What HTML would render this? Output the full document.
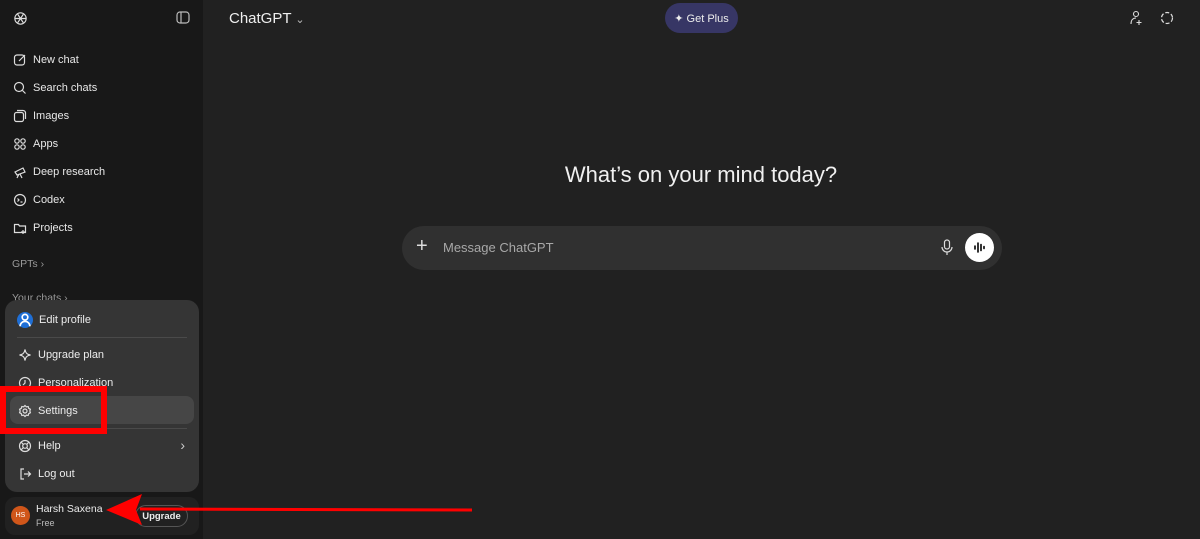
<!DOCTYPE html><html><head><style>
*{margin:0;padding:0;box-sizing:border-box}
body{width:1200px;height:539px;background:#212121;font-family:"Liberation Sans",sans-serif;color:#ececec;position:relative;overflow:hidden}
.sb{position:absolute;left:0;top:0;width:203px;height:539px;background:#181818}
.it{position:absolute;left:13px;font-size:11px;display:flex;align-items:center;gap:6px;color:#e8e8e8}
.it svg{width:14px;height:14px}
.mu{position:absolute;left:5px;top:300px;width:194px;height:192px;background:#353535;border-radius:12px}
.mi{position:absolute;left:13px;font-size:11px;display:flex;align-items:center;gap:6px;color:#ececec}
.mi svg{width:14px;height:14px}
</style></head><body>
<div class="sb">
<svg style="position:absolute;left:12px;top:10px" width="17" height="17" viewBox="0 0 24 24" fill="none" stroke="#ddd" stroke-width="1.6"><circle cx="12" cy="12" r="8"/><path d="M8 6l8 12M16 6L8 18M4 12h16"/></svg>
<svg style="position:absolute;left:176px;top:11px" width="14" height="13" viewBox="0 0 14 13" fill="none" stroke="#bbb" stroke-width="1.2"><rect x="1" y="1" width="12" height="11" rx="3"/><path d="M5 1v11"/></svg>
<div class="it" style="top:53px"><svg viewBox="0 0 14 14" fill="none" stroke="#ddd" stroke-width="1.2"><rect x="1.5" y="2" width="10" height="10" rx="2.5"/><path d="M6 8l6-6"/></svg>New chat</div>
<div class="it" style="top:81px"><svg viewBox="0 0 14 14" fill="none" stroke="#ddd" stroke-width="1.2"><circle cx="6" cy="6" r="4.5"/><path d="M9.5 9.5l3 3"/></svg>Search chats</div>
<div class="it" style="top:109px"><svg viewBox="0 0 14 14" fill="none" stroke="#ddd" stroke-width="1.2"><rect x="1.5" y="3.5" width="9" height="9" rx="2"/><path d="M4 1.5h6a2.5 2.5 0 012.5 2.5v6"/></svg>Images</div>
<div class="it" style="top:137px"><svg viewBox="0 0 14 14" fill="none" stroke="#ddd" stroke-width="1.2"><circle cx="4" cy="4" r="2.2"/><circle cx="10" cy="4" r="2.2"/><circle cx="4" cy="10" r="2.2"/><circle cx="10" cy="10" r="2.2"/></svg>Apps</div>
<div class="it" style="top:165px"><svg viewBox="0 0 14 14" fill="none" stroke="#ddd" stroke-width="1.2"><path d="M2 7l8-4 2 4-8 3zM6 9l-2 4M7 9l2 4"/></svg>Deep research</div>
<div class="it" style="top:193px"><svg viewBox="0 0 14 14" fill="none" stroke="#ddd" stroke-width="1.2"><circle cx="7" cy="7" r="5.5"/><path d="M4.5 5.5l1.5 1.5-1.5 1.5M7.5 9h2"/></svg>Codex</div>
<div class="it" style="top:221px"><svg viewBox="0 0 14 14" fill="none" stroke="#ddd" stroke-width="1.2"><path d="M1.5 3.5h4l1 1.5h6v6.5h-11z"/><path d="M10 9v4M8 11h4"/></svg>Projects</div>
<div style="position:absolute;left:12px;top:258px;font-size:10.5px;color:#999">GPTs ›</div>
<div style="position:absolute;left:12px;top:292px;font-size:10.5px;color:#999">Your chats ›</div>
</div>
<div class="mu">
<div class="mi" style="left:12px;top:12px"><span style="width:16px;height:16px;border-radius:50%;background:#1f6fd6;display:flex;align-items:center;justify-content:center"><svg width="10" height="10" viewBox="0 0 10 10" fill="none" stroke="#fff" stroke-width="1.2"><circle cx="5" cy="3" r="2"/><path d="M1.5 9.5a3.5 3.5 0 017 0"/></svg></span>Edit profile</div>
<div style="position:absolute;left:12px;right:12px;top:37px;height:1px;background:#4a4a4a"></div>
<div class="mi" style="top:48px"><svg viewBox="0 0 14 14" fill="none" stroke="#ddd" stroke-width="1.2"><path d="M7 1.5C7.5 5 9 6.5 12.5 7 9 7.5 7.5 9 7 12.5 6.5 9 5 7.5 1.5 7 5 6.5 6.5 5 7 1.5z"/></svg>Upgrade plan</div>
<div class="mi" style="top:76px"><svg viewBox="0 0 14 14" fill="none" stroke="#ddd" stroke-width="1.2"><circle cx="7" cy="7" r="5.5"/><path d="M7 4v3l-2 2"/></svg>Personalization</div>
<div style="position:absolute;left:5px;top:96px;width:184px;height:28px;background:#464646;border-radius:8px"></div>
<div class="mi" style="top:104px"><svg viewBox="0 0 14 14" fill="none" stroke="#ddd" stroke-width="1.2"><circle cx="7" cy="7" r="2"/><path d="M7 1.5l1.3 1.3 1.9-.3.5 1.8 1.7 1-.6 1.7.6 1.7-1.7 1-.5 1.8-1.9-.3L7 12.5 5.7 11.2l-1.9.3-.5-1.8-1.7-1 .6-1.7-.6-1.7 1.7-1 .5-1.8 1.9.3z"/></svg>Settings</div>
<div style="position:absolute;left:12px;right:12px;top:128px;height:1px;background:#4a4a4a"></div>
<div class="mi" style="top:139px"><svg viewBox="0 0 14 14" fill="none" stroke="#ddd" stroke-width="1.2"><circle cx="7" cy="7" r="5.5"/><circle cx="7" cy="7" r="2.3"/><path d="M3 3l2.4 2.4M11 3L8.6 5.4M3 11l2.4-2.4M11 11L8.6 8.6"/></svg>Help</div>
<div style="position:absolute;right:14px;top:137px;font-size:14px;color:#ccc">›</div>
<div class="mi" style="top:167px"><svg viewBox="0 0 14 14" fill="none" stroke="#ddd" stroke-width="1.2"><path d="M6 2H3v10h3M6 7h6.5M10 4.5L12.5 7 10 9.5"/></svg>Log out</div>
</div>
<div style="position:absolute;left:5px;top:497px;width:194px;height:38px;background:#212121;border-radius:10px"></div>
<div style="position:absolute;left:11px;top:506px;width:19px;height:19px;border-radius:50%;background:#d0561a;font-size:7px;color:#fff;display:flex;align-items:center;justify-content:center">HS</div>
<div style="position:absolute;left:36px;top:503px;font-size:10.5px">Harsh Saxena</div>
<div style="position:absolute;left:36px;top:518px;font-size:9px;color:#bbb">Free</div>
<div style="position:absolute;left:135px;top:505px;width:53px;height:22px;border:1px solid #555;border-radius:11px;font-size:9.5px;font-weight:bold;display:flex;align-items:center;justify-content:center">Upgrade</div>
<div style="position:absolute;left:0;top:386px;width:107px;height:48px;border:6px solid #f00"></div>
<svg style="position:absolute;left:0;top:0" width="1200" height="539"><path d="M140 509L472 510" stroke="#f00" stroke-width="3"/><path d="M106 510L142 494 136 510 142 525z" fill="#f00"/></svg>
<div style="position:absolute;left:229px;top:10px;font-size:15px;color:#eee">ChatGPT <span style="font-size:11px;color:#bbb">⌄</span></div>
<div style="position:absolute;left:665px;top:3px;width:73px;height:30px;border-radius:15px;background:#373665;font-size:11px;display:flex;align-items:center;justify-content:center;gap:4px">✦ Get Plus</div>
<svg style="position:absolute;left:1129px;top:10px" width="14" height="16" viewBox="0 0 14 16" fill="none" stroke="#ddd" stroke-width="1.1"><circle cx="7" cy="4" r="2.5"/><path d="M2 14c0-4 2-6 5-6M10 10v5M7.5 12.5h5"/></svg>
<svg style="position:absolute;left:1160px;top:11px" width="14" height="14" viewBox="0 0 14 14" fill="none" stroke="#ddd" stroke-width="1.2" stroke-dasharray="4 2"><circle cx="7" cy="7" r="5.5"/></svg>
<div style="position:absolute;left:0;width:1402px;top:162px;text-align:center;font-size:22px;color:#f0f0f0">What’s on your mind today?</div>
<div style="position:absolute;left:402px;top:226px;width:600px;height:44px;border-radius:22px;background:#303030"></div>
<div style="position:absolute;left:416px;top:235px;font-size:20px;color:#ddd;font-weight:300">+</div>
<div style="position:absolute;left:443px;top:240px;font-size:13px;color:#a8a8a8">Message ChatGPT</div>
<svg style="position:absolute;left:940px;top:239px" width="14" height="17" viewBox="0 0 14 17" fill="none" stroke="#ddd" stroke-width="1.2"><rect x="4.5" y="1" width="5" height="9" rx="2.5"/><path d="M2 8a5 5 0 0010 0M7 13v3"/></svg>
<div style="position:absolute;left:965px;top:233px;width:29px;height:29px;border-radius:50%;background:#fff"></div>
<svg style="position:absolute;left:972px;top:240px" width="15" height="15" viewBox="0 0 15 15" stroke="#000" stroke-width="1.6" stroke-linecap="round"><path d="M3 6v3M6 3v9M9 4.5v6M12 6.5v2"/></svg>
</body></html>
